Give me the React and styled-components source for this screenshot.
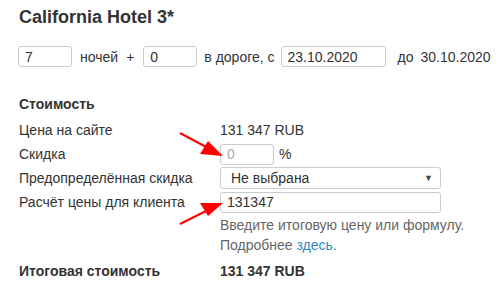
import React from 'react'
import styled, { createGlobalStyle } from 'styled-components'

const Global = createGlobalStyle`
  body {
    margin: 0;
    background: #fff;
    font-family: "Liberation Sans", Arial, sans-serif;
    font-size: 14px;
    color: #333;
  }
`

const Page = styled.div`
  position: relative;
  width: 503px;
  height: 297px;
  padding: 8px 0 0 19px;
  box-sizing: border-box;
  overflow: hidden;
`

const Title = styled.h1`
  margin: 0;
  font-size: 18px;
  font-weight: bold;
  line-height: 18px;
  color: #333;
`

const StayRow = styled.div`
  display: flex;
  align-items: center;
  gap: 8px;
  margin: 20px 0 0 -1px;
  height: 21px;
`

const Field = styled.input`
  box-sizing: border-box;
  width: ${p => p.w || 54}px;
  height: ${p => p.h || 21}px;
  padding: 0 6px;
  border: 1px solid #ccc;
  border-radius: 3px;
  font-family: inherit;
  font-size: 14px;
  color: ${p => p.muted ? '#aaa' : '#333'};
  background: #fff;
  outline: none;
`

const Word = styled.span`
  margin: ${p => p.m || '0'};
`

const Section = styled.h2`
  margin: 29px 0 0;
  font-size: 14px;
  font-weight: bold;
  line-height: 16px;
`

const Grid = styled.div`
  display: grid;
  grid-template-columns: 201px 1fr;
  row-gap: 2px;
  margin-top: ${p => p.top || 7}px;
  align-items: center;
`

const Label = styled.div`
  line-height: 22px;
  font-weight: ${p => p.bold ? 'bold' : 'normal'};
`

const Value = styled.div`
  display: flex;
  align-items: center;
  gap: 5px;
  min-height: 22px;
  font-weight: ${p => p.bold ? 'bold' : 'normal'};
`

const SelectBox = styled.div`
  box-sizing: border-box;
  width: 221px;
  height: 22px;
  padding: 0 7px 0 10px;
  border: 1px solid #ccc;
  border-radius: 3px;
  display: flex;
  align-items: center;
  justify-content: space-between;
  color: #333;
`

const Caret = styled.span`
  font-size: 9px;
  color: #444;
`

const Help = styled.div`
  color: #666;
  line-height: 20px;
`

const Link = styled.a`
  color: #2a8bbf;
  text-decoration: none;
`

const Arrows = styled.svg`
  position: absolute;
  left: 0;
  top: 0;
  pointer-events: none;
`

export default function App() {
  return (
    <Page>
      <Global />
      <Title>California Hotel 3*</Title>
      <StayRow>
        <Field defaultValue="7" />
        <Word>ночей</Word>
        <Word>+</Word>
        <Field defaultValue="0" style={{ marginLeft: 1 }} />
        <Word m="0 0 0 -1px">в дороге, с</Word>
        <Field w={105} defaultValue="23.10.2020" style={{ marginLeft: -2 }} />
        <Word m="0 0 0 4px">до</Word>
        <Word m="0 0 0 -1px">30.10.2020</Word>
      </StayRow>

      <Section>Стоимость</Section>
      <Grid>
        <Label>Цена на сайте</Label>
        <Value>131 347 RUB</Value>
        <Label>Скидка</Label>
        <Value>
          <Field defaultValue="0" muted />
          <span>%</span>
        </Value>
        <Label>Предопределённая скидка</Label>
        <Value>
          <SelectBox>
            <span>Не выбрана</span>
            <Caret>▼</Caret>
          </SelectBox>
        </Value>
        <Label>Расчёт цены для клиента</Label>
        <Value>
          <Field w={221} defaultValue="131347" />
        </Value>
        <div />
        <Help>
          Введите итоговую цену или формулу.
          <br />
          Подробнее <Link href="#">здесь.</Link>
        </Help>
      </Grid>
      <Grid top={5}>
        <Label bold>Итоговая стоимость</Label>
        <Value bold>131 347 RUB</Value>
      </Grid>

      <Arrows width="503" height="297" viewBox="0 0 503 297">
        <line x1="180" y1="133" x2="208" y2="148" stroke="#f00" strokeWidth="2" />
        <polygon points="223,156 200,154 208,141" fill="#f00" />
        <line x1="180" y1="224" x2="208" y2="210" stroke="#f00" strokeWidth="2" />
        <polygon points="223,203 208,216 200,203" fill="#f00" />
      </Arrows>
    </Page>
  )
}
